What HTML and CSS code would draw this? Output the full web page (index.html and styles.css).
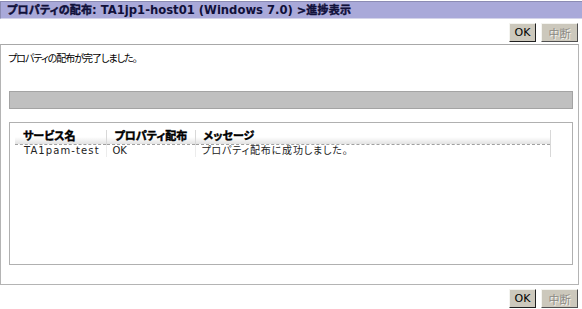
FILE: index.html
```html
<!DOCTYPE html>
<html lang="ja">

<head>
    <meta charset="UTF-8">
    <title>プロパティの配布</title>
    <link rel="stylesheet" href="styles.css">
</head>

<body>

    <div class="title-bar"><span class="jp">プロパティの配布</span>: TA1jp1-host01 (Windows 7.0) <span class="jp">&gt;進捗表示</span></div>

    <div class="button-row">
        <button class="btn btn-ok">OK</button>
        <button class="btn btn-stop" disabled>中断</button>
    </div>

    <div class="panel">
        <p class="status">プロパティの配布が完了しました。</p>

        <div class="progress"></div>

        <div class="result-box">
            <table class="result">
                <thead>
                    <tr>
                        <th class="col-service">サービス名</th>
                        <th class="col-dist">プロパティ配布</th>
                        <th class="col-msg">メッセージ</th>
                    </tr>
                </thead>
                <tbody>
                    <tr>
                        <td class="mono">TA1pam-test</td>
                        <td>OK</td>
                        <td class="msg">プロパティ配布に成功しました。</td>
                    </tr>
                </tbody>
            </table>
        </div>
    </div>

    <div class="button-row">
        <button class="btn btn-ok">OK</button>
        <button class="btn btn-stop" disabled>中断</button>
    </div>

</body>

</html>
```

FILE: styles.css
```css
* {
    padding: 0;
    margin: 0;
    box-sizing: border-box;
}

body {
    width: 582px;
    height: 309px;
    background-color: #fff;
    font-family: "DejaVu Sans", "Noto Sans CJK JP", sans-serif;
    font-size: 10px;
    color: #000;
    font-feature-settings: "palt";
}

.title-bar {
    margin-top: 1px;
    height: 18px;
    line-height: 16px;
    padding-left: 6px;
    background-color: #a9a9d9;
    border-top: 1px solid #8c8cb4;
    border-left: 1px solid #8c8cb4;
    border-bottom: 1px solid #d4d4ea;
    font-weight: bold;
    font-size: 11.6px;
    color: #10103a;
}

.title-bar .jp {
    font-size: 11px;
    letter-spacing: 0.2px;
    -webkit-text-stroke: 0.45px #10103a;
}

.button-row {
    display: flex;
    justify-content: flex-end;
    gap: 5px;
    padding: 4px 4px 0 0;
    height: 25px;
}

.btn {
    height: 19px;
    padding: 0;
    background-color: #ccc8bc;
    border: 1px solid;
    border-color: #f4f4f0 #202020 #202020 #f4f4f0;
    font-family: "DejaVu Sans", "Noto Sans CJK JP", sans-serif;
    font-size: 11px;
    color: #000;
}

.btn-ok {
    width: 27px;
}

.btn-stop {
    width: 37px;
}

.btn:disabled {
    color: #8c8a84;
    text-shadow: 1px 1px 0 #f4f4f0;
    border-color: #f4f4f0 #505050 #505050 #f4f4f0;
}

.panel {
    height: 241px;
    margin-right: 3px;
    border: 1px solid #b4b4b4;
    border-top-color: #a8a8a8;
    padding: 8px 5px 0 8px;
}

.status {
    line-height: 12px;
    margin-left: -1px;
    letter-spacing: -1px;
}

.progress {
    margin-top: 26px;
    height: 18px;
    background-color: #c0c0c0;
    border: 1px solid #a4a4a4;
}

.result-box {
    margin-top: 13px;
    height: 143px;
    border: 1px solid #b0b0b0;
    padding: 7px 0 0 5px;
}

.result {
    width: 536px;
    border-collapse: collapse;
    border-right: 1px solid #d8d8d8;
}

.result th {
    text-align: left;
    font-size: 11px;
    font-weight: bold;
    -webkit-text-stroke: 0.45px #000;
    height: 14px;
    line-height: 13px;
    padding: 0 4px 0 8px;
    background: linear-gradient(#ffffff, #ffffff 50%, #e2e2e2);
    border-bottom: 1px dashed #a0a0a0;
    border-right: 1px solid #d8d8d8;
}

.result td {
    height: 12px;
    line-height: 12px;
    padding: 0 4px 0 9px;
    border-right: 1px solid #ececec;
    color: #222;
}

.result td + td {
    padding-left: 6px;
}

.result th:last-child,
.result td:last-child {
    border-right: none;
}

.col-service {
    width: 91px;
}

.col-dist {
    width: 89px;
}

.mono {
    letter-spacing: 1.1px;
}

.msg {
    letter-spacing: 0.8px;
}
```
